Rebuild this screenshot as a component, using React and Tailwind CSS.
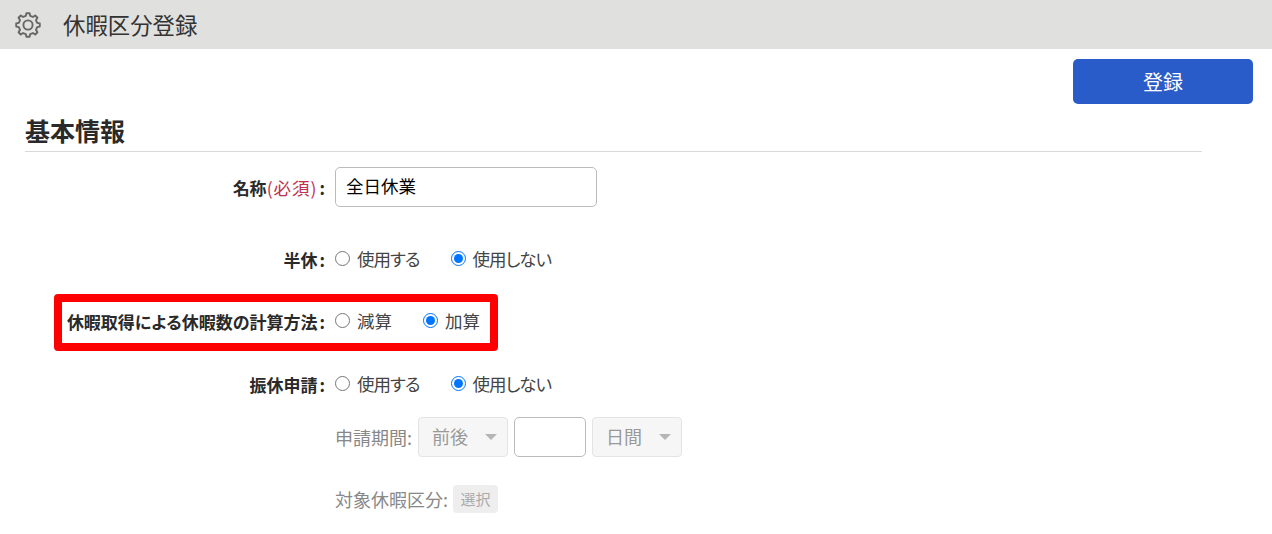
import React from "react";

const font = { fontFamily: '"Noto Sans CJK JP", "Noto Sans", sans-serif' };

// 8-tooth outline gear, points worked out once per render
function gearPath() {
    const teeth = 8;
    const cx = 13;
    const cy = 13;
    const pts = [];
    for (let i = 0; i < teeth; i++) {
        const a = (i * 2 * Math.PI) / teeth - Math.PI / 2;
        const step = (2 * Math.PI) / teeth;
        pts.push([a - step * 0.3, 9.4]);
        pts.push([a - step * 0.17, 11.9]);
        pts.push([a + step * 0.17, 11.9]);
        pts.push([a + step * 0.3, 9.4]);
    }
    return (
        pts
            .map(([a, r], i) => `${i === 0 ? "M" : "L"}${(cx + r * Math.cos(a)).toFixed(2)} ${(cy + r * Math.sin(a)).toFixed(2)}`)
            .join(" ") + " Z"
    );
}

function Gear() {
    return (
        <svg width="26" height="26" viewBox="0 0 26 26" fill="none" stroke="#666666" strokeWidth="1.9" strokeLinejoin="round">
            <path d={gearPath()} />
            <circle cx="13" cy="13" r="4.6" />
        </svg>
    );
}

function Radio({ label, checked, name, gap, tight }) {
    return (
        <label className={`flex items-center text-[17.5px] text-[#444] [font-feature-settings:'palt'] ${gap}`}>
            <input type="radio" name={name} defaultChecked={checked} className="w-[15px] h-[15px] m-0 mr-[7px] -mt-[1px]" />
            <span className={tight ? "tracking-[-1px]" : ""}>{label}</span>
        </label>
    );
}

function Row({ label, className, children }) {
    return (
        <div className={`flex items-center ${className}`}>
            <div className="w-[300px] pt-[2px] text-right text-[17px] font-bold text-[#2a2a2a] whitespace-nowrap [font-feature-settings:'palt']">
                {label}
                <span className="ml-[2px]">:</span>
            </div>
            <div className="ml-[10px] flex items-center">{children}</div>
        </div>
    );
}

function DisabledSelect({ value }) {
    return (
        <div className="w-[90px] h-[40px] flex items-center justify-between pl-[13px] pr-[10px] bg-[#f6f6f6] border border-[#e4e4e4] rounded-[4px] text-[18px] text-[#999]">
            <span className="-mt-[2px]">{value}</span>
            <span className="w-0 h-0 border-x-[6px] border-x-transparent border-t-[6px] border-t-[#b5b5b5]"></span>
        </div>
    );
}

export default function App() {
    return (
        <div className="relative w-[1272px] h-[534px] bg-white overflow-hidden" style={font}>
            <header className="h-[49px] bg-[#e0e0de] flex items-center pl-[15px]">
                <Gear />
                <h1 className="ml-[22px] text-[22.4px] font-normal text-[#333]">休暇区分登録</h1>
            </header>

            <div className="flex justify-end pr-[19px] pt-[10px]">
                <button className="w-[180px] h-[45px] rounded-[5px] bg-[#295cc9] text-white text-[20px]">登録</button>
            </div>

            <div className="ml-[25px] w-[1177px] h-[48px] border-b border-[#d9d9d9] flex items-end">
                <h2 className="text-[25px] leading-[38px] font-bold text-[#2a2a2a] mb-[2px] -mt-[20px]">基本情報</h2>
            </div>

            <div className="ml-[25px]">
                <Row label={<>名称<span className="font-normal text-[#c0304f] text-[17.5px] tracking-[1px]">(必須)</span></>} className="mt-[15px]">
                    <input
                        defaultValue="全日休業"
                        className="w-[262px] h-[40px] px-[10px] pb-[3px] border border-[#bbb] rounded-[5px] text-[17.5px] text-black outline-none"
                    />
                </Row>
                <Row label="半休" className="mt-[39px] h-[26px]">
                    <Radio name="half" label="使用する" gap="mr-[31px]" tight />
                    <Radio name="half" label="使用しない" checked tight />
                </Row>
                <Row label="休暇取得による休暇数の計算方法" className="mt-[36px] h-[26px]">
                    <Radio name="calc" label="減算" gap="mr-[31px]" />
                    <Radio name="calc" label="加算" checked />
                </Row>
                <Row label="振休申請" className="mt-[37px] h-[26px]">
                    <Radio name="sub" label="使用する" gap="mr-[31px]" tight />
                    <Radio name="sub" label="使用しない" checked tight />
                </Row>

                <div className="ml-[310px] mt-[20px] flex flex-col">
                    <div className="flex items-center">
                        <span className="text-[18px] text-[#888] w-[83px] whitespace-nowrap">申請期間:</span>
                        <DisabledSelect value="前後" />
                        <input className="ml-[6px] w-[72px] h-[40px] border border-[#bbb] rounded-[5px]" />
                        <div className="ml-[6px]">
                            <DisabledSelect value="日間" />
                        </div>
                    </div>
                    <div className="flex items-center mt-[28px]">
                        <span className="text-[18px] text-[#888] w-[118px] whitespace-nowrap">対象休暇区分:</span>
                        <button disabled className="w-[45px] h-[28px] rounded-[4px] bg-[#eeeeee] text-[15px] text-[#aaa]">選択</button>
                    </div>
                </div>
            </div>

            {/* 赤枠 */}
            <div className="absolute left-[54px] top-[294px] w-[444px] h-[57px] border-[8px] border-[#ff0000] rounded-[4px]"></div>
        </div>
    );
}
